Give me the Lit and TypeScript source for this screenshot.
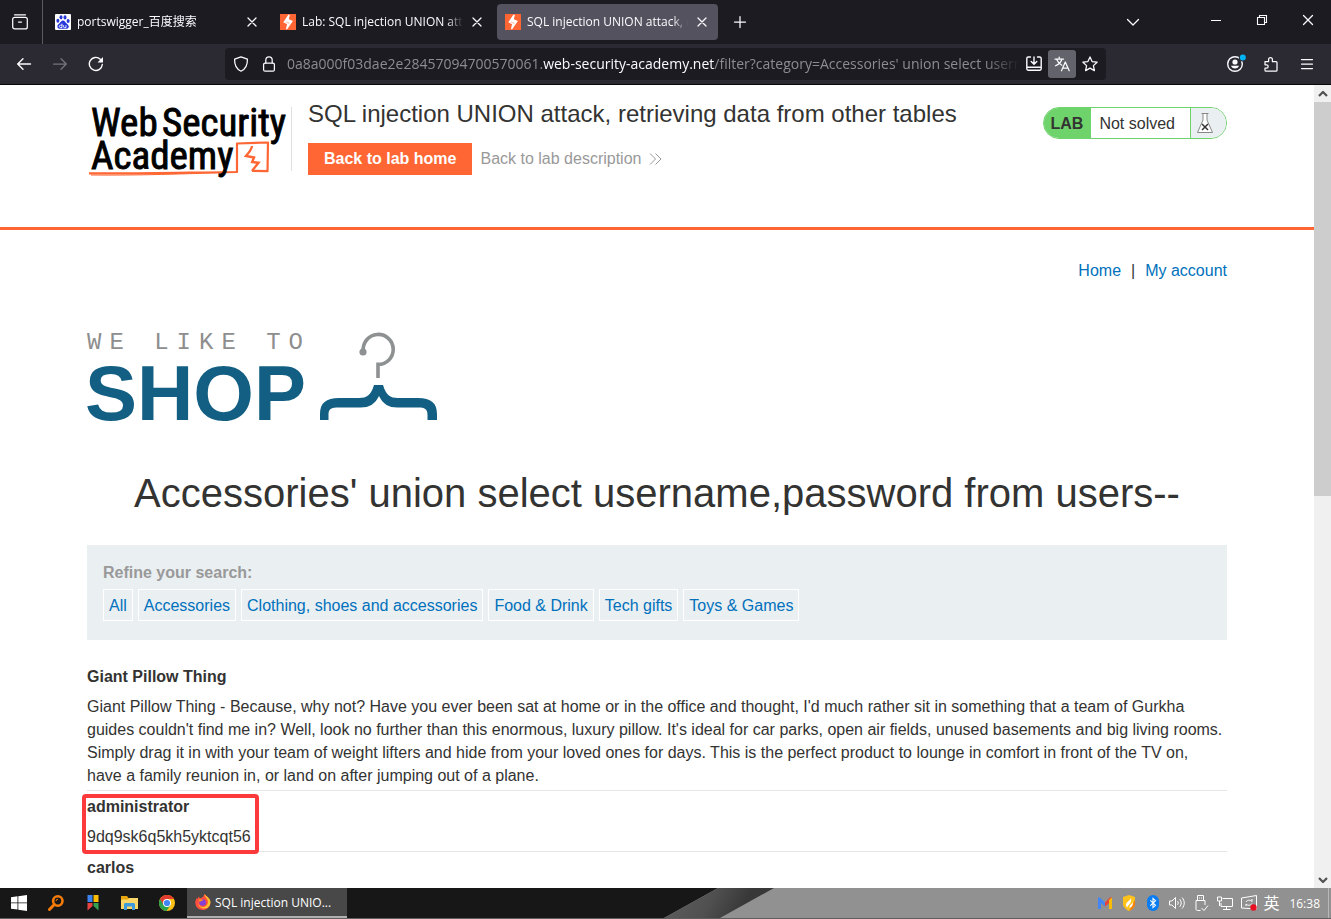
import { LitElement, html, css, svg } from "lit";
import { customElement, property } from "lit/decorators.js";

const line = (body: unknown) => html`<svg
  width="16"
  height="16"
  viewBox="0 0 16 16"
  fill="none"
  stroke="currentColor"
  stroke-width="1.25"
  stroke-linecap="round"
  stroke-linejoin="round"
  aria-hidden="true"
>${body}</svg>`;

const closeIcon = line(svg`<path d="M4 4l8 8M12 4l-8 8"/>`);
const chevronUp = line(svg`<path stroke-width="2.2" stroke-linecap="butt" d="M4 10l4-4 4 4"/>`);
const chevronDown = line(svg`<path stroke-width="2.2" stroke-linecap="butt" d="M4 6l4 4 4-4"/>`);

const baiduIcon = svg`<rect width="16" height="16" rx="1" fill="#fff"/>
  <g fill="#2636d9"><ellipse cx="6" cy="3.3" rx="1.5" ry="2.1"/><ellipse cx="10" cy="3.4" rx="1.5" ry="2.1"/>
  <ellipse cx="2.9" cy="6.8" rx="1.5" ry="2"/><ellipse cx="13.1" cy="6.9" rx="1.5" ry="2"/>
  <path d="M8 6.6c-1.6 0-2.2 1.7-3.4 2.7-1.3 1-2.4 2-2.2 3.500.2 1.500 1.500 2.200 3 2h5.300c1.600.2 2.900-.6 3.100-2 .1-1.500-1-2.400-2.200-3.400C10.300 8.300 9.600 6.600 8 6.600z"/></g>
  <path d="M7 9.600v4H5.600c-1.700 0-1.700-2.400 0-2.400H7M8.600 11.200v1.600c0 .5.3.8.8.8H11v-2.400" fill="none" stroke="#fff" stroke-width=".9"/>`;
const burpIcon = svg`<rect width="16" height="16" fill="#f63"/>
  <path fill="#fff" d="M8.300 0.800H9.800L8.900 5.300 12.900 6.900 7.200 15.200H5.900L7 10.300 3.300 8.300z"/>
  <path fill="#f63" d="M6.300 7.400l3.500 1.400-.7 1.300-3.600-1.600z" opacity=".35"/>`;

@customElement("browser-tab")
class BrowserTab extends LitElement {
  @property() label = "";
  @property() icon = "burp";
  @property({ type: Boolean, reflect: true }) active = false;

  static styles = css`
    :host {
      display: flex;
      align-items: center;
      flex: 0 1 221px;
      box-sizing: border-box;
      min-width: 0;
      height: 36px;
      padding: 0 8px;
      border-radius: 4px;
      gap: 6px;
      color: #fbfbfe;
    }
    :host([active]) { background: #53525e; }
    .icon { flex: none; }
    .label {
      flex: 1;
      overflow: hidden;
      white-space: nowrap;
      font-size: 12px;
      line-height: 20px;
      mask-image: linear-gradient(to left, transparent, #000 16px);
    }
    .close {
      display: flex;
      flex: none;
      padding: 0;
      border: 0;
      background: none;
      color: inherit;
    }
  `;
  render() {
    return html`
      <svg class="icon" width="16" height="16" viewBox="0 0 16 16" aria-hidden="true">
        ${this.icon === "baidu" ? baiduIcon : burpIcon}
      </svg>
      <span class="label">${this.label}</span>
      <button class="close" aria-label="Close tab">${closeIcon}</button>
    `;
  }
}

@customElement("browser-chrome")
class BrowserChrome extends LitElement {
  static styles = css`
    :host {
      display: block;
      flex: none;
      color: #fbfbfe;
      font-family: "Open Sans", "Noto Sans CJK SC", sans-serif;
      border-bottom: 1px solid #08080a;
    }
    button {
      display: flex;
      align-items: center;
      justify-content: center;
      padding: 0;
      border: 0;
      background: none;
      color: inherit;
    }
    .tabs { display: flex; align-items: center; height: 44px; background: #1c1b22; }
    .view { width: 42px; height: 44px; padding-right: 2px; box-sizing: border-box; }
    .strip {
      display: flex;
      align-items: center;
      flex: 1;
      gap: 4px;
      height: 44px;
      padding-left: 4px;
      border-left: 1px solid #5b5a64;
      min-width: 0;
    }
    .new { width: 36px; height: 36px; }
    .all { width: 36px; height: 36px; margin-right: 42px; }
    .win { width: 46px; height: 40px; margin-bottom: 4px; }
    .bar { display: flex; align-items: center; height: 40px; padding: 0 6px; background: #2b2a33; }
    .tool { width: 36px; height: 36px; }
    .off { color: #75747c; }
    .space { flex: 0 1 111px; }
    .url {
      display: flex;
      align-items: center;
      flex: 1;
      min-width: 0;
      height: 32px;
      padding: 0 2px;
      border-radius: 4px;
      background: #1c1b22;
    }
    .key { width: 28px; height: 28px; flex: none; border-radius: 3px; }
    .lit { background: #63636b; }
    .address {
      flex: 1;
      min-width: 0;
      margin-left: 4px;
      overflow: hidden;
      white-space: nowrap;
      font-size: 14px;
      line-height: 24px;
      color: #8d8c94;
      mask-image: linear-gradient(to left, transparent, #000 36px);
    }
    .host { color: #fbfbfe; }
  `;
  render() {
    return html`
      <div class="tabs">
        <button class="view" aria-label="View tabs">
          ${line(svg`<path d="M2.500 .8h11"/><rect x=".7" y="3.300" width="14.600" height="11.600" rx="2"/><path d="M6.500 8h3"/>`)}
        </button>
        <div class="strip">
          <browser-tab icon="baidu" label="portswigger_百度搜索"></browser-tab>
          <browser-tab label="Lab: SQL injection UNION attack, retrieving data from other tables"></browser-tab>
          <browser-tab active label="SQL injection UNION attack, retrieving data from other tables"></browser-tab>
          <button class="new" aria-label="New tab">${line(svg`<path d="M8 2.500v11M2.500 8h11"/>`)}</button>
        </div>
        <button class="all" aria-label="List all tabs">${line(svg`<path d="M2.500 5.500L8 11l5.500-5.500"/>`)}</button>
        <button class="win" aria-label="Minimize">${line(svg`<path stroke-width="1" stroke-linecap="butt" d="M3 8.500h10"/>`)}</button>
        <button class="win" aria-label="Restore">
          ${line(svg`<path stroke-width="1.100" stroke-linejoin="miter" d="M3.500 5.500h7v7h-7zM5.500 5.500v-2h7v7h-2"/>`)}
        </button>
        <button class="win" aria-label="Close">${line(svg`<path d="M3.500 3.500l9 9M12.500 3.500l-9 9"/>`)}</button>
      </div>
      <div class="bar">
        <button class="tool" aria-label="Back">${line(svg`<path stroke-width="1.400" d="M14.500 8H1.700M7 2.700L1.700 8 7 13.300"/>`)}</button>
        <button class="tool off" aria-label="Forward">${line(svg`<path d="M1.500 8h12.800M9 2.700L14.300 8 9 13.300"/>`)}</button>
        <button class="tool" aria-label="Reload">
          ${line(svg`<path stroke-width="1.400" d="M14.300 8.500A6.500 6.500 0 1 1 12.300 3.200L14 5"/><path fill="currentColor" stroke="none" d="M15 1v5.500H9.500z"/>`)}
        </button>
        <span class="space"></span>
        <div class="url">
          <button class="key" aria-label="Tracking protection">
            ${line(svg`<path d="M8 .8l6.400 2.400c.2 5-1.600 9.700-6.400 12C3.200 12.900 1.400 8.200 1.600 3.200z"/>`)}
          </button>
          <button class="key" aria-label="Site information">
            ${line(svg`<rect x="2.600" y="7" width="10.800" height="8.200" rx="1.500"/><path d="M4.800 7V4a3.200 3.200 0 0 1 6.400 0v3"/>`)}
          </button>
          <div class="address" role="textbox" aria-label="Address" tabindex="0">0a8a000f03dae2e28457094700570061.<span class="host">web-security-academy.net</span>/filter?category=Accessories' union select username,password from users--</div>
          <button class="key" aria-label="Save page">
            ${line(svg`<path stroke-width="1.400" d="M4.500 1H2.200A1.400 1.400 0 0 0 .8 2.400v10.400a1.400 1.400 0 0 0 1.400 1.400h11.600a1.400 1.400 0 0 0 1.400-1.400V2.400A1.400 1.400 0 0 0 13.800 1h-2.300M8 1v7M5.200 5.500L8 8.300l2.800-2.800M1 11.300h14"/>`)}
          </button>
          <button class="key lit" aria-label="Translate page">
            ${line(svg`<path d="M1 3h8.500M5.200 1v2M8 3c-1 3-3.500 5.500-6.500 6.800M2.500 3c1 2.700 3 5 5.300 6.200M7.500 14.800L11.300 6l3.900 8.800M8.800 12h5"/>`)}
          </button>
          <button class="key" aria-label="Bookmark this page">
            ${line(svg`<path d="M8 .9l2.100 4.700 5 .6-3.700 3.400 1 5L8 12.100l-4.400 2.500 1-5L.9 6.200l5-.6z"/>`)}
          </button>
        </div>
        <span class="space"></span>
        <button class="tool" aria-label="Account">
          <svg width="22" height="22" viewBox="0 0 22 22" aria-hidden="true">
            <circle cx="11" cy="11" r="7.300" fill="none" stroke="#fbfbfe" stroke-width="1.400" />
            <circle cx="11" cy="9" r="2.600" fill="#fbfbfe" />
            <path d="M6.800 12.800h8.400a4.600 4.600 0 0 1-8.400 0z" fill="#fbfbfe" />
            <circle cx="18.800" cy="4.500" r="4" fill="#2b2a33" />
            <circle cx="18.800" cy="4.500" r="3" fill="#00b3f4" />
          </svg>
        </button>
        <button class="tool" aria-label="Extensions">
          ${line(svg`<path d="M2 5.500h3.600V3.400a1.900 1.900 0 0 1 3.800 0v2.100H13a1 1 0 0 1 1 1v7.700a1 1 0 0 1-1 1H3a1 1 0 0 1-1-1v-2h1.500a1.700 1.700 0 0 0 0-3.400H2z"/>`)}
        </button>
        <button class="tool" aria-label="Menu">${line(svg`<path d="M2.500 3.500h11M2.500 8h11M2.500 12.500h11"/>`)}</button>
      </div>
    `;
  }
}

@customElement("lab-header")
class LabHeader extends LitElement {
  static styles = css`
    :host { display: block; border-bottom: 3px solid #f63; }
    .inner {
      display: flex;
      align-items: flex-start;
      max-width: 1140px;
      margin: 0 auto;
      padding: 12px 0 52px;
    }
    .brand { flex: none; margin-top: 10px; padding-right: 4px; border-right: 1px solid #e0e0e0; height: 64px; }
    .brand svg { display: block; overflow: visible; }
    .brand text { font-family: "Liberation Sans Narrow", "Roboto Condensed", Lato, sans-serif; font-size: 39px; fill: #000; stroke: #000; stroke-width: 0.9px; }
    .main { flex: 1; padding-left: 16px; }
    h2 { margin: 0 0 12px; font-size: 24px; line-height: 34px; font-weight: 400; }
    .links { display: flex; align-items: center; gap: 8px; }
    .button {
      padding: 0 16px;
      background: #f63;
      color: #fff;
      font-weight: 700;
      line-height: 32px;
      text-decoration: none;
    }
    .back { display: flex; align-items: center; gap: 8px; color: #999; text-decoration: none; }
    .status {
      display: flex;
      flex: none;
      box-sizing: border-box;
      height: 32px;
      margin-top: 10px;
      overflow: hidden;
      border: 1px solid #6fd36c;
      border-radius: 16px;
      line-height: 32px;
    }
    .lab { padding: 0 8px 0 7px; background: #6fd36c; font-weight: 700; }
    .state { padding: 0 15px 0 8px; }
    .flask {
      display: flex;
      align-items: center;
      box-sizing: border-box;
      width: 36px;
      padding-left: 4px;
      border-left: 1px solid #6fd36c;
      background: #eaeff2;
    }
  `;
  render() {
    return html`
      <div class="inner">
        <div class="brand">
          <svg width="200" height="70" viewBox="0 0 200 70" role="img" aria-label="Web Security Academy">
            <g fill="none" stroke="#f63" stroke-linejoin="round">
              <path stroke-width="2.200" d="M2 66.300C50 67 100 65.500 150 65V36.500l31-1-.5 28.700-15.500-.3" />
              <path stroke-width="2.400" stroke-linejoin="miter" d="M165 39c-.3 3-2.500 6-6 10l8 1.500-1.800 4.500 6.300.7c-2 2.500-4 5-6.500 8.300" />
              <path stroke-width="1" d="M4 68c45 .5 95-1 146-3" />
            </g>
            <text x="4" y="29">Web</text>
            <text x="75" y="29">Security</text>
            <text x="4" y="62">Academy</text>
          </svg>
        </div>
        <div class="main">
          <h2>SQL injection UNION attack, retrieving data from other tables</h2>
          <div class="links">
            <a class="button" href="#home">Back to lab home</a>
            <a class="back" href="#description">Back to lab description
              <svg width="14" height="12" viewBox="0 0 14 12" fill="none" stroke="#999" aria-hidden="true">
                <path d="M1 .5L6.500 6 1 11.500M6.500 .5L12 6l-5.500 5.500" />
              </svg>
            </a>
          </div>
        </div>
        <div class="status">
          <span class="lab">LAB</span>
          <span class="state">Not solved</span>
          <span class="flask">
            <svg width="20" height="22" viewBox="0 0 20 22" aria-hidden="true">
              <path d="M8 2v6L2.500 20.500h15L12 8V2" fill="#fff" stroke="#888" />
              <path d="M6.500 1.500h7" stroke="#888" />
              <path d="M7 12l6 6M13 12l-6 6" stroke="#333" stroke-width="1.500" />
            </svg>
          </span>
        </div>
      </div>
    `;
  }
}

interface Entry { name: string; text: string; marked?: boolean; }

const entries: Entry[] = [
  {
    name: "Giant Pillow Thing",
    text: "Giant Pillow Thing - Because, why not? Have you ever been sat at home or in the office and thought, I'd much rather sit in something that a team of Gurkha guides couldn't find me in? Well, look no further than this enormous, luxury pillow. It's ideal for car parks, open air fields, unused basements and big living rooms. Simply drag it in with your team of weight lifters and hide from your loved ones for days. This is the perfect product to lounge in comfort in front of the TV on, have a family reunion in, or land on after jumping out of a plane.",
  },
  { name: "administrator", text: "9dq9sk6q5kh5yktcqt56", marked: true },
  { name: "carlos", text: "" },
];

const categories = ["All", "Accessories", "Clothing, shoes and accessories", "Food & Drink", "Tech gifts", "Toys & Games"];

@customElement("shop-page")
class ShopPage extends LitElement {
  static styles = css`
    :host { display: block; max-width: 1140px; margin: 0 auto; line-height: 23px; }
    a { color: #0071bc; text-decoration: none; }
    .nav { display: flex; justify-content: flex-end; gap: 10px; padding-top: 29px; }
    .logo { display: block; margin-top: 50px; overflow: visible; }
    .like { font-family: "Liberation Mono", monospace; font-size: 24px; letter-spacing: 8px; fill: #8e8e8e; }
    .shop { font-size: 78px; font-weight: 700; fill: #125f83; }
    h1 { margin: 43px 0 24px; font-size: 40px; line-height: 56px; font-weight: 400; text-align: center; }
    .filters { padding: 16px 16px 19px; background: #eaeff2; }
    .filters h3 { margin: 0 0 5px; font-size: 16px; line-height: 23px; color: #999; }
    .list { display: flex; flex-wrap: wrap; gap: 5px; }
    .list a { padding: 2px 5px 0; border: 1px solid #fff; line-height: 28px; }
    table { display: block; margin-top: 21px; }
    tbody, th, td { display: block; }
    tr { display: block; position: relative; }
    tr + tr { border-top: 1px solid #e5e5e5; }
    th { padding: 4px 0 3px; text-align: left; }
    td { padding: 4px 0 3px; }
    .mark {
      position: absolute;
      z-index: 1;
      top: 3px;
      left: -5px;
      bottom: -3px;
      width: 169px;
      border: 4px solid #fc3a3c;
      border-radius: 4px;
    }
  `;
  render() {
    return html`
      <nav class="nav"><a href="#home">Home</a><span>|</span><a href="#account">My account</a></nav>
      <svg class="logo" width="350" height="90" viewBox="0 0 350 90" role="img" aria-label="We like to shop">
        <text class="like" x="0" y="17">WE LIKE TO</text>
        <text class="shop" x="-2" y="88">SHOP</text>
        <path d="M276.300 19A15 15 0 1 1 291 32.400V46" fill="none" stroke="#8e9192" stroke-width="3.600" />
        <circle cx="276" cy="20" r="3.600" fill="#8e9192" />
        <path d="M287 53h9c3 10 7 13 15 13h20c13 0 19 5 19 16v6h-9.500v-5c0-6-3-7.500-9-7.500h-21c-9 0-14-3-18.500-11.500-4.500 8.500-9.500 11.500-18.500 11.500h-21c-9 0-11 1.500-11 7.500v5H233v-6c0-11 6-16 19-16h20c8 0 12-3 15-13z" fill="#125f83" />
      </svg>
      <h1>Accessories' union select username,password from users--</h1>
      <section class="filters">
        <h3>Refine your search:</h3>
        <div class="list">${categories.map((c) => html`<a href="#filter">${c}</a>`)}</div>
      </section>
      <table>
        <tbody>
          ${entries.map(
            (e) => html`<tr>
              <th scope="row">${e.name}</th>
              <td>${e.text}${e.marked ? html`<span class="mark"></span>` : ""}</td>
            </tr>`
          )}
        </tbody>
      </table>
    `;
  }
}

@customElement("task-bar")
class TaskBar extends LitElement {
  static styles = css`
    :host {
      display: flex;
      flex: none;
      align-items: stretch;
      box-sizing: border-box;
      height: 31px;
      border-bottom: 1px solid #5f5f5f;
      background: #919191;
      font-family: "Open Sans", "Noto Sans CJK SC", sans-serif;
      font-size: 12px;
      color: #fff;
    }
    button { display: flex; align-items: center; padding: 0; border: 0; background: none; color: inherit; font: inherit; }
    .left { display: flex; flex: none; background: #171717; }
    .app { width: 37px; justify-content: center; }
    .current {
      box-sizing: border-box;
      width: 160px;
      gap: 4px;
      margin-left: 2px;
      padding: 0 8px;
      border-bottom: 2px solid #b0b0b0;
      background: #484848;
    }
    .slope { flex: 0 1 430px; height: 30px; min-width: 0; }
    .tray { display: flex; flex: none; align-items: center; gap: 8px; margin-left: auto; padding-right: 2px; }
    .tray svg { flex: none; }
    .ime { font-size: 16px; line-height: 24px; margin-left: -2px; }
    .time { margin-left: 2px; }
    .desk { align-self: stretch; border-left: 1px solid #b8b8b8; }
  `;
  render() {
    return html`
      <div class="left">
        <button class="app" aria-label="Start">
          <svg width="16" height="16" viewBox="0 0 16 16" fill="#fff" aria-hidden="true">
            <path d="M0 2.200l6.500-.9v6.200H0zM7.300 1.200L16 0v7.500H7.300zM0 8.300h6.500v6.300L0 13.700zM7.300 8.300H16V16l-8.700-1.300z" />
          </svg>
        </button>
        <button class="app" aria-label="Search">
          <svg width="16" height="16" viewBox="0 0 16 16" fill="none" stroke="#f57c0a" aria-hidden="true">
            <circle cx="9.800" cy="6" r="4.700" stroke-width="2.600" />
            <path d="M6.300 9.500L1.500 14.500" stroke-width="3" stroke-linecap="round" />
            <path d="M8 6.200a2 2 0 0 1 2-2" stroke-width="1" />
          </svg>
        </button>
        <button class="app" aria-label="Bookmarks">
          <svg width="16" height="16" viewBox="0 0 16 16" aria-hidden="true">
            <path fill="#3b84f2" d="M2.500 0h5v7h-5z" /><path fill="#fbbc05" d="M8.500 0h5v7h-5z" />
            <path fill="#e94442" d="M2.500 8h5v3l-5 4.500z" /><path fill="#34a050" d="M8.500 8h5v7.500l-5-4.500z" />
          </svg>
        </button>
        <button class="app" aria-label="Files">
          <svg width="17" height="16" viewBox="0 0 17 16" aria-hidden="true">
            <path fill="#e5a50f" d="M0 1h6l1.500 2H16v5H0z" /><path fill="#fcd667" d="M0 4.500h7L8.500 3H17v11H0z" />
            <path fill="#3f9bdc" d="M3 15V9.500C3 8.700 3.500 8 4.500 8h8c1 0 1.500.7 1.500 1.500V15h-3v-3.500H6V15z" />
          </svg>
        </button>
        <button class="app" aria-label="Chrome">
          <svg width="16" height="16" viewBox="0 0 16 16" aria-hidden="true">
            <circle cx="8" cy="8" r="8" fill="#fbc116" />
            <path fill="#2da14c" d="M8 8L1.070 4A8 8 0 0 0 7.500 16L11.500 10z" />
            <path fill="#e33b2e" d="M8 4h6.930A8 8 0 0 0 1.070 4L4.600 10z" />
            <circle cx="8" cy="8" r="4" fill="#fff" /><circle cx="8" cy="8" r="3.100" fill="#4285f4" />
          </svg>
        </button>
        <button class="current">
          <svg width="16" height="16" viewBox="0 0 16 16" aria-hidden="true">
            <path fill="#ff4f3e" d="M3.500 2.500L5 4.500 8 3 9.500 0c1 1.500 3 2.500 4 4 3 3 2.500 11.500-5.500 12C2.500 16 .3 12 .3 8.500c0-2 1-3.500 1.400-4.500l.8 1z" />
            <path fill="#ffc22e" d="M9.500 0c0 2 1.500 3.500 2.500 5 2.500 4-.5 8-4 8-3 0-4.500-2-4.500-4C2.500 14 12 17.500 15 11c1-3 .3-5.500-1.500-7C12.500 2.500 10.500 2 9.500 0z" />
            <circle cx="7.600" cy="8.500" r="3.300" fill="#8440d8" /><path fill="#ff8a1f" d="M3.500 5.500c2-1 4 0 4.500 1-1.500 0-2 1-3.500 1.500z" />
          </svg>
          <span>SQL injection UNIO...</span>
        </button>
      </div>
      <svg class="slope" viewBox="0 0 430 30" preserveAspectRatio="xMaxYMid slice" aria-hidden="true">
        <defs>
          <linearGradient id="edge" gradientUnits="userSpaceOnUse" x1="330" y1="8" x2="386" y2="38">
            <stop offset="0" stop-color="#5a5a5a" /><stop offset=".5" stop-color="#505050" /><stop offset="1" stop-color="#383838" />
          </linearGradient>
        </defs>
        <path fill="#171717" d="M0 0h371l-54 30H0z" /><path fill="url(#edge)" d="M371 0h56l-54 30h-56z" />
      </svg>
      <div class="tray">
        <svg width="16" height="16" viewBox="0 0 16 16" aria-hidden="true">
          <path fill="#4285f4" d="M1 3l3 2v9H1z" /><path fill="#4285f4" d="M1 2.500h2l5 5v4l-7-6z" />
          <path fill="#ea4335" d="M15 2.500h-2l-5 5v4l7-6z" /><path fill="#fbbc04" d="M12 5l3-2.500V14h-3z" />
        </svg>
        <svg width="16" height="16" viewBox="0 0 16 16" aria-hidden="true">
          <path fill="#ffc21a" d="M8 0l6 2v7c0 3-3 5.500-6 7-3-1.500-6-4-6-7V2z" /><path fill="#f47c0b" d="M8 16c3-1.500 6-4 6-7V5z" />
          <path fill="#fff" d="M10 2.500c0 3-5 4-5 7.500 0 1 .5 2 1.500 2.500C6 10 11.500 9 10 2.500zM11.500 7c0 2-3.500 3-3 6 2.500-1 4-3 3-6z" />
        </svg>
        <svg width="16" height="16" viewBox="0 0 16 16" aria-hidden="true">
          <rect x="2" width="12" height="16" rx="6" fill="#0a7df2" /><path d="M5.300 5.300l5.200 5L8 12.600V3.400l2.500 2.300-5.200 5" fill="none" stroke="#fff" stroke-width="1.100" />
        </svg>
        <svg width="16" height="16" viewBox="0 0 16 16" fill="none" stroke="#fff" aria-hidden="true">
          <path d="M.5 6h2.500l3.500-3.500v11L3 10H.5zM8.500 6.200c1 1 1 2.600 0 3.600M10.700 4.200c2 2.200 2 5.400 0 7.600M13 2.500c3 3.200 3 7.800 0 11" />
        </svg>
        <svg width="16" height="16" viewBox="0 0 16 16" fill="none" stroke="#fff" aria-hidden="true">
          <path d="M4.500 5.500v-5h6v5M6.500 2.500v1M8.500 2.500v1M7.500 15.500h-3c-1 0-1.500-.5-1.500-1.500V5.500h9V10M8.500 13l2.500 2.500 4-5" />
        </svg>
        <svg width="16" height="16" viewBox="0 0 16 16" fill="none" stroke="#fff" aria-hidden="true">
          <path d="M5.500 3.500h10v8H4V8M9.500 11.500v3M6 14.500h7.500M.5 2v4h4V2zM2.500 6v5" />
        </svg>
        <svg width="16" height="16" viewBox="0 0 16 16" fill="none" stroke="#fff" aria-hidden="true">
          <path d="M.5 3L15.500.5v13.500L.5 13zM5 7c1-2 4-2.500 6-.5V4M11 8.500c-1 2-4 2.500-6 .5v2" /><circle cx="12.500" cy="12.500" r="3.200" fill="#e81123" stroke="none" />
        </svg>
        <span class="ime">英</span>
        <span class="time">16:38</span>
        <span class="desk"></span>
      </div>
    `;
  }
}

@customElement("app-root")
class AppRoot extends LitElement {
  static styles = css`
    :host {
      display: flex;
      flex-direction: column;
      height: 100vh;
      overflow: hidden;
      background: #fff;
      color: #333332;
      font-family: "Liberation Sans", Arial, sans-serif;
      font-size: 16px;
    }
    .body { display: flex; flex: 1; min-height: 0; }
    .page { flex: 1; min-width: 0; overflow: hidden; }
    .scroll { display: flex; flex: none; flex-direction: column; align-items: center; width: 17px; background: #f0f0f0; color: #505050; }
    .thumb { flex: 21; align-self: stretch; background: #cdcdcd; }
    .track { flex: 20; }
    .arrow { display: flex; align-items: center; height: 17px; }
  `;
  render() {
    return html`
      <browser-chrome></browser-chrome>
      <div class="body">
        <main class="page">
          <lab-header></lab-header>
          <shop-page></shop-page>
        </main>
        <div class="scroll" aria-hidden="true">
          <span class="arrow">${chevronUp}</span>
          <span class="thumb"></span>
          <span class="track"></span>
          <span class="arrow">${chevronDown}</span>
        </div>
      </div>
      <task-bar></task-bar>
    `;
  }
}
